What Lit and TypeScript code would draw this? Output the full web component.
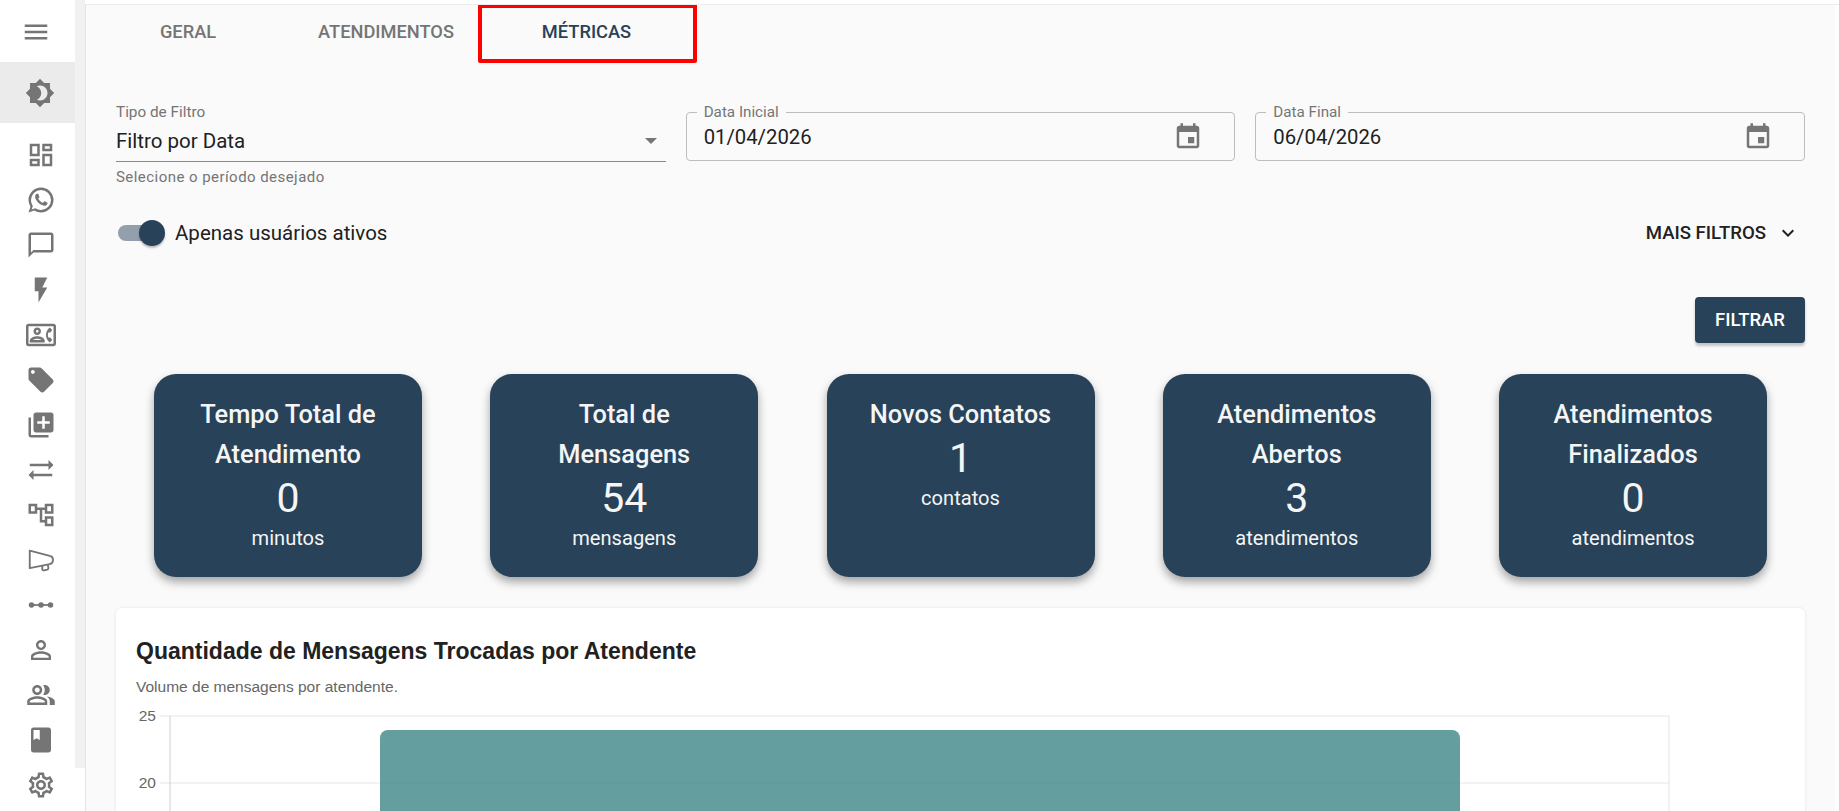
import { LitElement, html, css, svg } from "lit";
import { customElement } from "lit/decorators.js";

const P: Record<string, string> = {
  menu: "M3 18h18v-2H3v2zm0-5h18v-2H3v2zm0-7v2h18V6H3z",
  theme: "M20 8.69V4h-4.69L12 .69 8.69 4H4v4.69L.69 12 4 15.31V20h4.69L12 23.31 15.31 20H20v-4.69L23.31 12 20 8.69zM12 18c-.89 0-1.74-.2-2.5-.55C11.56 16.5 13 14.42 13 12s-1.44-4.5-3.5-5.45C10.26 6.2 11.11 6 12 6c3.31 0 6 2.69 6 6s-2.69 6-6 6z",
  dash: "M19 5v2h-4V5h4M9 5v6H5V5h4m10 8v6h-4v-6h4M9 17v2H5v-2h4M21 3h-8v6h8V3zM11 3H3v10h8V3zm10 8h-8v10h8V11zm-10 4H3v6h8v-6z",
  wa: "M16.75 13.96c.25.13.41.2.46.3.06.11.04.61-.21 1.18-.2.56-1.24 1.1-1.7 1.12-.46.02-.47.36-2.96-.73-2.49-1.09-3.99-3.75-4.11-3.92-.12-.17-.96-1.38-.92-2.61.05-1.22.69-1.8.95-2.04.24-.26.51-.29.68-.26h.47c.15 0 .36-.06.55.45l.69 1.87c.06.13.1.28.01.44l-.27.41-.39.42c-.12.12-.26.25-.12.5.12.26.62 1.09 1.32 1.78.91.88 1.71 1.17 1.95 1.3.24.14.39.12.54-.04l.81-.94c.19-.25.35-.19.58-.11l1.67.88M12 2a10 10 0 0 1 10 10 10 10 0 0 1-10 10c-1.97 0-3.8-.57-5.35-1.55L2 22l1.55-4.65A9.969 9.969 0 0 1 2 12 10 10 0 0 1 12 2m0 2a8 8 0 0 0-8 8c0 1.72.54 3.31 1.46 4.61L4.5 19.5l2.89-.96A7.95 7.95 0 0 0 12 20a8 8 0 0 0 8-8 8 8 0 0 0-8-8z",
  chat: "M20 2H4c-1.1 0-2 .9-2 2v18l4-4h14c1.1 0 2-.9 2-2V4c0-1.1-.9-2-2-2zm0 14H6l-2 2V4h16v12z",
  flash: "M7 2v11h3v9l7-12h-4l4-8z",
  contact: "M22 3H2C.9 3 0 3.9 0 5v14c0 1.1.9 2 2 2h20c1.1 0 1.99-.9 1.99-2L24 5c0-1.1-.9-2-2-2zm0 16H2V5h20v14zm-2.99-1.01l1.99-1.99-1.51-2h-1.64c-.22-.63-.35-1.3-.35-2s.13-1.37.35-2h1.64l1.51-2-1.99-1.99c-1.31.98-2.28 2.37-2.73 3.99-.18.64-.28 1.31-.28 2s.1 1.36.28 2c.45 1.61 1.42 3.01 2.73 3.99zM9 12c1.65 0 3-1.35 3-3s-1.35-3-3-3-3 1.35-3 3 1.35 3 3 3zm0-4c.55 0 1 .45 1 1s-.45 1-1 1-1-.45-1-1 .45-1 1-1zm6 8.59c0-2.5-3.97-3.58-6-3.58s-6 1.08-6 3.58V18h12v-1.41zM5.48 16c.74-.5 2.22-1 3.52-1s2.77.49 3.52 1H5.48z",
  tag: "M21.41 11.58l-9-9C12.05 2.22 11.55 2 11 2H4c-1.1 0-2 .9-2 2v7c0 .55.22 1.05.59 1.42l9 9c.36.36.86.58 1.41.58.55 0 1.05-.22 1.41-.59l7-7c.37-.36.59-.86.59-1.41 0-.55-.23-1.06-.59-1.42zM5.5 7C4.67 7 4 6.33 4 5.5S4.67 4 5.5 4 7 4.67 7 5.5 6.33 7 5.5 7z",
  lib: "M4 6H2v14c0 1.1.9 2 2 2h14v-2H4V6zm16-4H8c-1.1 0-2 .9-2 2v12c0 1.1.9 2 2 2h12c1.1 0 2-.9 2-2V4c0-1.1-.9-2-2-2zm-1 9h-4v4h-2v-4H9V9h4V5h2v4h4v2z",
  sync: "M22 8l-4-4v3H3v2h15v3zM2 16l4 4v-3h15v-2H6v-3z",
  tree: "M22 11V3h-7v3H9V3H2v8h7V8h2v10h4v3h7v-8h-7v3h-2V8h2v3h7zM7 9H4V5h3v4zm10 6h3v4h-3v-4zm0-10h3v4h-3V5z",
  person: "M12 5.9c1.16 0 2.1.94 2.1 2.1s-.94 2.1-2.1 2.1S9.9 9.16 9.9 8s.94-2.1 2.1-2.1m0 9c2.97 0 6.1 1.46 6.1 2.1v1.1H5.9V17c0-.64 3.13-2.1 6.1-2.1M12 4C9.79 4 8 5.79 8 8s1.79 4 4 4 4-1.79 4-4-1.79-4-4-4zm0 9c-2.67 0-8 1.34-8 4v3h16v-3c0-2.66-5.33-4-8-4z",
  people: "M16.67 13.13C18.04 14.06 19 15.32 19 17v3h4v-3c0-2.18-3.57-3.47-6.33-3.87zM15 12c2.21 0 4-1.79 4-4s-1.79-4-4-4c-.47 0-.91.1-1.33.24C14.5 5.27 15 6.58 15 8s-.5 2.73-1.33 3.76c.42.14.86.24 1.33.24zM9 12c2.21 0 4-1.79 4-4s-1.79-4-4-4-4 1.79-4 4 1.79 4 4 4zm0-6c1.1 0 2 .9 2 2s-.9 2-2 2-2-.9-2-2 .9-2 2-2zM9 13c-2.67 0-8 1.34-8 4v3h16v-3c0-2.66-5.33-4-8-4zm6 5H3v-.99C3.2 16.29 6.3 15 9 15s5.8 1.29 6 2v1z",
  book: "M18 2H6c-1.1 0-2 .9-2 2v16c0 1.1.9 2 2 2h12c1.1 0 2-.9 2-2V4c0-1.1-.9-2-2-2zM6 4h5v8l-2.5-1.5L6 12V4z",
  gear: "M19.43 12.98c.04-.32.07-.64.07-.98 0-.34-.03-.66-.07-.98l2.11-1.65c.19-.15.24-.42.12-.64l-2-3.46c-.09-.16-.26-.25-.44-.25-.06 0-.12.01-.17.03l-2.49 1c-.52-.4-1.08-.73-1.69-.98l-.38-2.65C14.46 2.18 14.25 2 14 2h-4c-.25 0-.46.18-.49.42l-.38 2.65c-.61.25-1.17.59-1.69.98l-2.49-1c-.06-.02-.12-.03-.18-.03-.17 0-.34.09-.43.25l-2 3.46c-.13.22-.07.49.12.64l2.11 1.65c-.04.32-.07.65-.07.98 0 .33.03.66.07.98l-2.11 1.65c-.19.15-.24.42-.12.64l2 3.46c.09.16.26.25.44.25.06 0 .12-.01.17-.03l2.49-1c.52.4 1.08.73 1.69.98l.38 2.65c.03.24.24.42.49.42h4c.25 0 .46-.18.49-.42l.38-2.65c.61-.25 1.17-.59 1.69-.98l2.49 1c.06.02.12.03.18.03.17 0 .34-.09.43-.25l2-3.46c.12-.22.07-.49-.12-.64l-2.11-1.65zm-1.98-1.71c.04.31.05.52.05.73 0 .21-.02.43-.05.73l-.14 1.13.89.7 1.08.84-.7 1.21-1.27-.51-1.04-.42-.9.68c-.43.32-.84.56-1.25.73l-1.06.43-.16 1.13-.2 1.35h-1.4l-.19-1.35-.16-1.13-1.06-.43c-.43-.18-.83-.41-1.23-.71l-.91-.7-1.06.43-1.27.51-.7-1.21 1.08-.84.89-.7-.14-1.13c-.03-.31-.05-.54-.05-.74s.02-.43.05-.73l.14-1.13-.89-.7-1.08-.84.7-1.21 1.27.51 1.04.42.9-.68c.43-.32.84-.56 1.25-.73l1.06-.43.16-1.13.2-1.35h1.39l.19 1.35.16 1.13 1.06.43c.43.18.83.41 1.23.71l.91.7 1.06-.43 1.27-.51.7 1.21-1.07.85-.89.7.14 1.13zM12 8c-2.21 0-4 1.79-4 4s1.79 4 4 4 4-1.79 4-4-1.79-4-4-4zm0 6c-1.1 0-2-.9-2-2s.9-2 2-2 2 .9 2 2-.9 2-2 2z",
  event: "M17 12h-5v5h5v-5zM16 1v2H8V1H6v2H5c-1.11 0-1.99.9-1.99 2L3 19c0 1.1.89 2 2 2h14c1.1 0 2-.9 2-2V5c0-1.1-.9-2-2-2h-1V1h-2zm3 18H5V8h14v11z",
  more: "M16.59 8.59L12 13.17 7.41 8.59 6 10l6 6 6-6z",
};

const icon = (n: string, cls = "") =>
  html`<svg class="ic ${cls}" viewBox="0 0 24 24"><path d=${P[n]}></path></svg>`;

const megaphone = html`<svg class="ic" viewBox="0 0 24 24">
  <path d="M3 4.5v14l16-3.2c1.8-.4 2.6-1.8 2.6-3.3s-.8-3-2.6-3.3z" fill="none" stroke="#757575" stroke-width="1.5" stroke-linejoin="round"></path>
  <path d="M13 16.5v2.7c0 .8.7 1.3 1.5 1.1l2.5-.6c.6-.2 1-.8.9-1.4l-.4-2.2" fill="none" stroke="#757575" stroke-width="1.5"></path>
</svg>`;

const dots = html`<svg class="ic" viewBox="0 0 24 24">
  <circle cx="4.4" cy="12" r="2.2" fill="#757575"></circle>
  <circle cx="12" cy="12" r="2.2" fill="#757575"></circle>
  <circle cx="19.6" cy="12" r="2.2" fill="#757575"></circle>
  <rect x="4" y="11.3" width="16" height="1.4" fill="#757575"></rect>
</svg>`;

const navItems = [
  icon("dash"), icon("wa"), icon("chat"), icon("flash"), icon("contact"), icon("tag"), icon("lib"),
  icon("sync"), icon("tree"), megaphone, dots, icon("person"), icon("people"), icon("book"), icon("gear"),
];

const cards = [
  { t: "Tempo Total de Atendimento", v: "0", u: "minutos" },
  { t: "Total de Mensagens", v: "54", u: "mensagens" },
  { t: "Novos Contatos", v: "1", u: "contatos" },
  { t: "Atendimentos Abertos", v: "3", u: "atendimentos" },
  { t: "Atendimentos Finalizados", v: "0", u: "atendimentos" },
];

const chart = svg`
  <line x1="25" x2="1534" y1="1" y2="1" class="grid"></line>
  <line x1="25" x2="1534" y1="68" y2="68" class="grid"></line>
  <line x1="1534" x2="1534" y1="1" y2="200" class="grid"></line>
  <line x1="35" x2="35" y1="1" y2="200" class="axis"></line>
  <text x="21" y="6" class="tick" text-anchor="end">25</text>
  <text x="21" y="73" class="tick" text-anchor="end">20</text>
  <path d="M245 120V23a8 8 0 0 1 8-8h1064a8 8 0 0 1 8 8v97z" class="bar"></path>
`;

@customElement("app-root")
export class AppRoot extends LitElement {
  static styles = css`
    :host { display: block; width: 1839px; height: 811px; overflow: hidden; background: #fff; font-family: Roboto, "Liberation Sans", sans-serif; }
    .shell { display: flex; height: 811px; }
    .ic { width: 30px; height: 30px; fill: #757575; display: block; flex: none; }
    .side { width: 85px; flex: none; display: flex; flex-direction: column; background: #fff; }
    .rail { width: 85px; height: 768px; background: linear-gradient(90deg, #fff 75px, #f1f1f1 75px); }
    .rail-in { width: 75px; padding-top: 4px; display: flex; flex-direction: column; }
    .burger { height: 58px; display: flex; align-items: center; padding-left: 21px; padding-bottom: 2px; box-sizing: border-box; }
    .theme { height: 61px; background: #ebebeb; display: flex; align-items: center; justify-content: center; padding-left: 5px; box-sizing: border-box; }
    .nav { margin-top: 9px; display: flex; flex-direction: column; }
    .nav div { height: 45px; display: flex; align-items: center; justify-content: center; padding-left: 7px; box-sizing: border-box; }
    .main { flex: 1; min-width: 0; border-left: 1px solid #e4e4e4; border-top: 1px solid #ececec; margin-top: 4px; background: linear-gradient(90deg, #fafafa 1749px, #fdfdfd 1749px); position: relative; height: 807px; box-sizing: border-box; overflow: hidden; }
    .tabs { display: grid; grid-template-columns: 160px 236px 165px; margin-left: 22px; height: 53px; align-items: center; text-align: center; font-size: 18.25px; font-weight: 500; color: #757575; }
    .tabs .on { color: #274259; }
    .mark { position: absolute; left: 392px; top: -1px; width: 219px; height: 59px; border: 4px solid #f00; border-radius: 2px; box-sizing: border-box; }
    .content { padding: 47px 34px 0 30px; }
    .filters { display: grid; grid-template-columns: repeat(3, 1fr); gap: 20px; }
    .sel-label { font-size: 15.3px; line-height: 16px; color: #757575; margin-top: -1px; }
    .sel-val { display: flex; justify-content: space-between; align-items: center; height: 41px; border-bottom: 1px solid #8a8a8a; font-size: 20.5px; color: #212121; }
    .caret { width: 0; height: 0; border-left: 6px solid transparent; border-right: 6px solid transparent; border-top: 6.5px solid #757575; margin-right: 9px; }
    .help { font-size: 15px; line-height: 16px; margin-top: 7px; color: #757575; letter-spacing: .45px; }
    .date { position: relative; height: 49px; margin-top: 7px; border: 1px solid #bdbdbd; border-radius: 4px; box-sizing: border-box; display: flex; align-items: center; justify-content: space-between; padding: 0 31px 0 17px; font-size: 20.3px; color: #212121; }
    .date label { position: absolute; left: 10px; top: -9px; background: #fafafa; padding: 0 7px; font-size: 15.2px; line-height: 16px; color: #757575; }
    .row { display: flex; align-items: center; justify-content: space-between; margin-top: 28px; height: 40px; }
    .sw { display: flex; align-items: center; gap: 10px; font-size: 20.5px; color: #212121; padding-left: 2px; }
    .track { width: 47px; height: 26px; position: relative; }
    .track i { position: absolute; left: 0; right: 2px; top: 5px; height: 16px; border-radius: 8px; background: #939fac; }
    .track b { position: absolute; right: 0; top: 0; width: 26px; height: 26px; border-radius: 50%; background: #274259; box-shadow: 0 2px 2px rgba(0,0,0,.25); }
    .more { display: flex; align-items: center; gap: 10px; font-size: 18.6px; font-weight: 500; color: #212121; padding-right: 5px; }
    .more .ic { fill: #212121; width: 24px; height: 24px; }
    .act { display: flex; justify-content: flex-end; margin-top: 44px; }
    .btn { width: 110px; height: 46px; display: flex; align-items: center; justify-content: center; background: #274259; color: #fff; border-radius: 4px; font-size: 18.5px; font-weight: 500; box-shadow: 0 3px 3px rgba(0,0,0,.22); }
    .cards { display: flex; justify-content: space-between; padding: 0 38px; margin-top: 31px; }
    .card { width: 268px; height: 203px; box-sizing: border-box; border-radius: 22px; background: #274259; color: #f5f5f5; box-shadow: 0 5px 10px rgba(0,0,0,.35); padding: 20px 28px; text-align: center; display: flex; flex-direction: column; }
    .card h3 { margin: 0; font-size: 25.4px; font-weight: 500; line-height: 40px; }
    .card .v { font-size: 41px; line-height: 40px; margin-top: 3.5px; }
    .card .u { font-size: 20.1px; line-height: 40px; margin-top: .5px; }
    .panel { margin-top: 31px; background: #fff; border-radius: 6px; box-shadow: 0 0 3px rgba(0,0,0,.1); padding: 30px 20px 0; height: 240px; font-family: "Liberation Sans", Arial, sans-serif; }
    .panel h2 { margin: 0; font-size: 23px; line-height: 26px; font-weight: 700; color: #212121; }
    .panel p { margin: 14px 0 0; font-size: 15.5px; line-height: 18px; color: #666; }
    .panel svg { display: block; margin: 11px 0 0 -1px; width: 1560px; height: 128px; overflow: hidden; }
    .grid { stroke: #e5e5e5; stroke-width: 1; }
    .axis { stroke: #cfcfcf; stroke-width: 1; }
    .tick { font: 15.5px "Liberation Sans", Arial, sans-serif; fill: #666; }
    .bar { fill: rgba(42, 120, 120, .72); }
  `;

  render() {
    return html`
      <div class="shell">
        <aside class="side">
          <div class="rail">
            <div class="rail-in">
              <div class="burger">${icon("menu")}</div>
              <div class="theme">${icon("theme")}</div>
              <div class="nav">${navItems.map((n) => html`<div>${n}</div>`)}</div>
            </div>
          </div>
        </aside>
        <main class="main">
          <nav class="tabs"><span>GERAL</span><span>ATENDIMENTOS</span><span class="on">MÉTRICAS</span></nav>
          <div class="mark"></div>
          <section class="content">
            <div class="filters">
              <div>
                <div class="sel-label">Tipo de Filtro</div>
                <div class="sel-val"><span>Filtro por Data</span><span class="caret"></span></div>
                <div class="help">Selecione o período desejado</div>
              </div>
              <div class="date"><label>Data Inicial</label><span>01/04/2026</span>${icon("event")}</div>
              <div class="date"><label>Data Final</label><span>06/04/2026</span>${icon("event")}</div>
            </div>
            <div class="row">
              <div class="sw"><span class="track"><i></i><b></b></span>Apenas usuários ativos</div>
              <div class="more">MAIS FILTROS ${icon("more")}</div>
            </div>
            <div class="act"><div class="btn">FILTRAR</div></div>
            <div class="cards">
              ${cards.map((c) => html`<article class="card"><h3>${c.t}</h3><div class="v">${c.v}</div><div class="u">${c.u}</div></article>`)}
            </div>
            <div class="panel">
              <h2>Quantidade de Mensagens Trocadas por Atendente</h2>
              <p>Volume de mensagens por atendente.</p>
              <svg viewBox="0 -8 1560 128">${chart}</svg>
            </div>
          </section>
        </main>
      </div>
    `;
  }
}
